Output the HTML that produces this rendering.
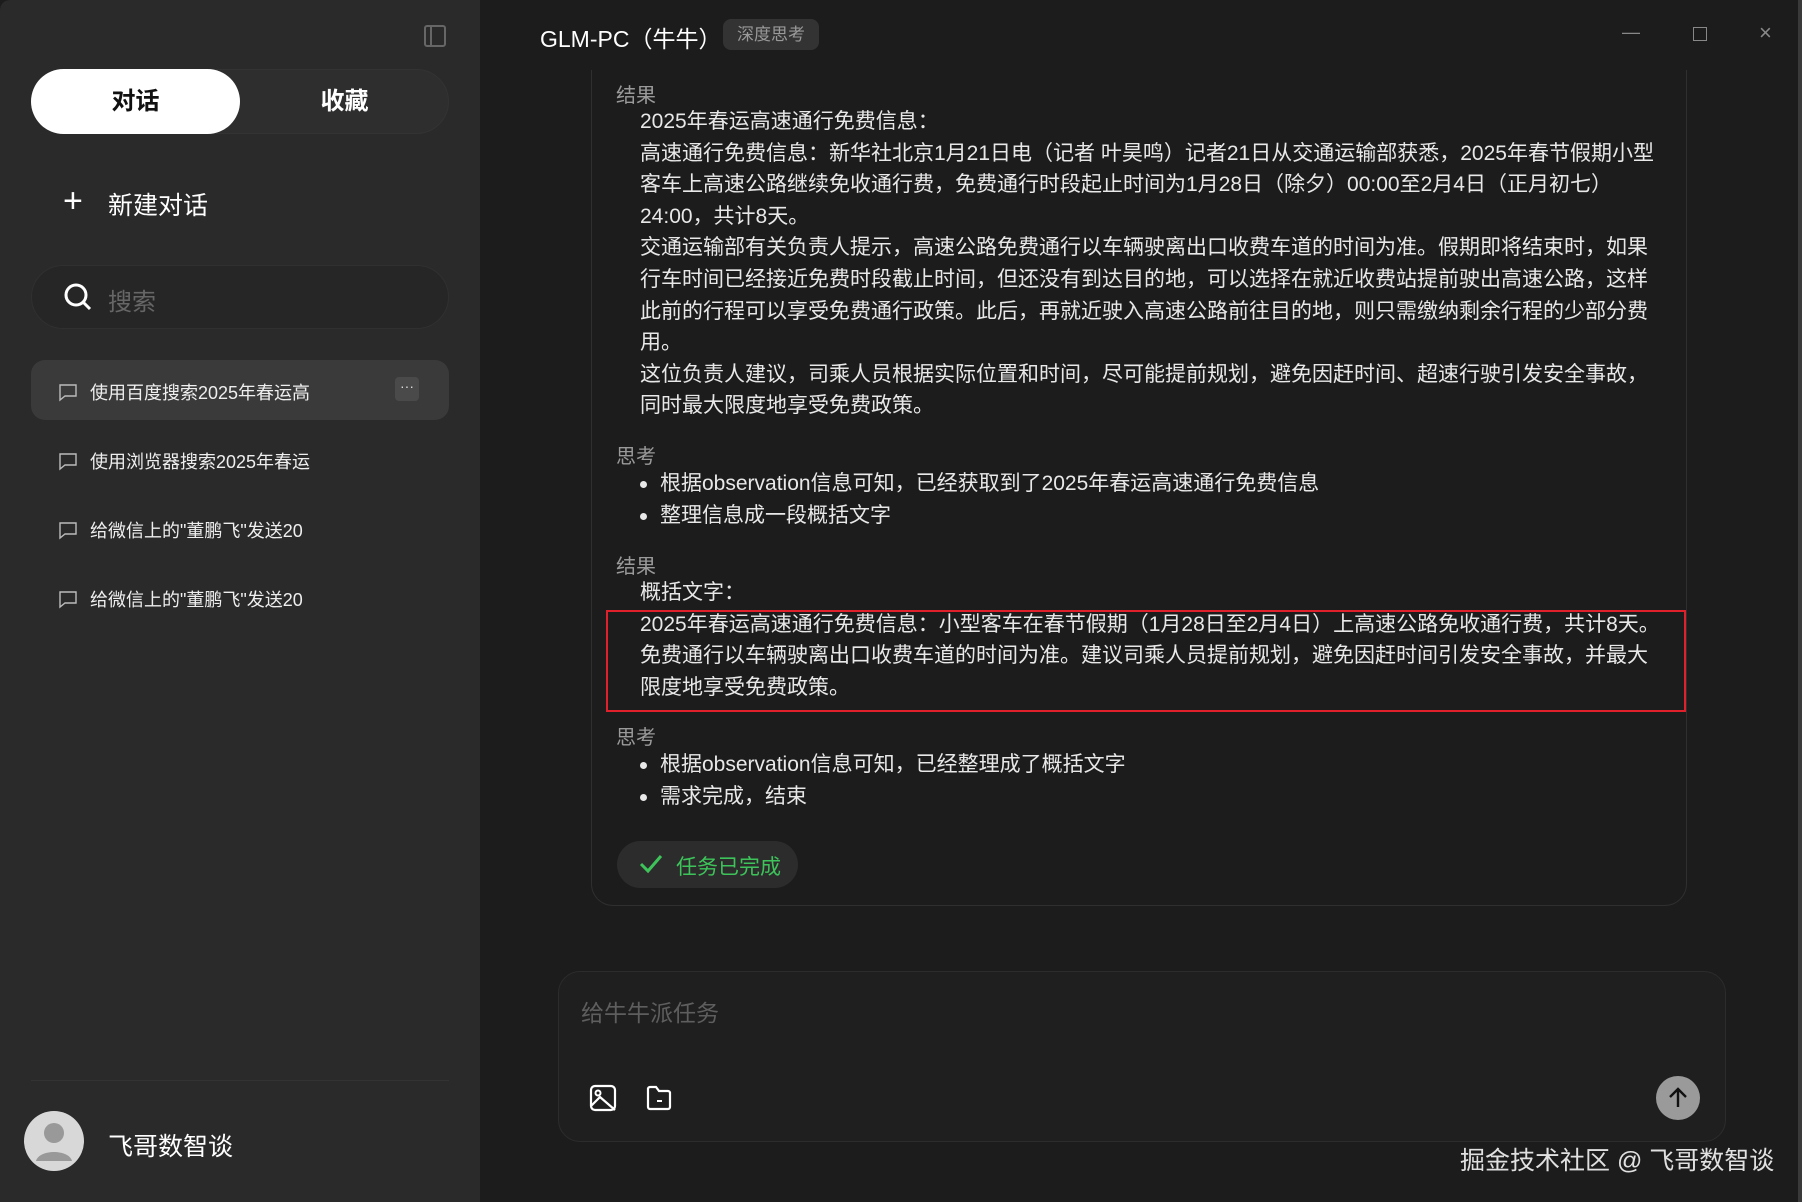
<!DOCTYPE html>
<html><head><meta charset="utf-8"><style>
*{margin:0;padding:0;box-sizing:border-box}
body{width:1802px;height:1202px;background:#1c1c1c;font-family:"Liberation Sans","Noto Sans CJK SC",sans-serif;color:#e6e6e6;position:relative;overflow:hidden}
.sb{position:absolute;left:0;top:0;width:480px;height:1202px;background:#2a2a2a;border-radius:10px 0 0 0}
.abs{position:absolute;white-space:nowrap}
.tabs{left:31px;top:69px;width:418px;height:65px;border-radius:33px;background:#2e2e2e;border:1px solid #333}
.tab1{left:31px;top:69px;width:209px;height:65px;border-radius:33px;background:#fff;color:#111;font-size:24px;font-weight:bold;text-align:center;line-height:65px}
.tab2{left:240px;top:69px;width:209px;height:65px;color:#fff;font-size:24px;font-weight:bold;text-align:center;line-height:65px}
.search{left:31px;top:265px;width:418px;height:64px;border-radius:32px;background:#262626;border:1px solid #303030}
.item{font-size:18px;color:#eee}
.t{font-size:21px;color:#e8e8e8;line-height:31.6px}
.lab{font-size:20px;color:#9a9a9a}
.dot{display:inline-block;width:7px;height:7px;border-radius:50%;background:#e8e8e8;margin-right:13px;vertical-align:middle}
</style></head><body>
<div class="sb"></div>
<svg class="abs" style="left:423px;top:24px" width="24" height="24" viewBox="0 0 24 24"><rect x="2" y="2" width="20" height="20" rx="2" fill="none" stroke="#666" stroke-width="2"/><line x1="8" y1="2" x2="8" y2="22" stroke="#666" stroke-width="2"/></svg>
<div class="abs tabs"></div>
<div class="abs tab1">对话</div>
<div class="abs tab2">收藏</div>
<div class="abs" style="left:63px;top:184px;font-size:34px;color:#fff;line-height:34px">+</div>
<div class="abs" style="left:108px;top:186px;font-size:25px;color:#fff">新建对话</div>
<div class="abs search"></div>
<svg class="abs" style="left:62px;top:281px" width="32" height="32" viewBox="0 0 32 32"><circle cx="14" cy="14" r="10" fill="none" stroke="#fff" stroke-width="3"/><line x1="21" y1="21" x2="28" y2="28" stroke="#fff" stroke-width="3"/></svg>
<div class="abs" style="left:108px;top:282px;font-size:24px;color:#666">搜索</div>
<div class="abs" style="left:31px;top:360px;width:418px;height:60px;border-radius:14px;background:#3a3a3a"></div>
<div class="abs" style="left:395px;top:377px;width:24px;height:24px;border-radius:4px;background:#4a4a4a;color:#ddd;font-size:14px;text-align:center;line-height:18px">···</div>
<svg class="abs" style="left:58px;top:382px" width="20" height="20" viewBox="0 0 20 20"><path d="M2 3h16v11H7l-5 4z" fill="none" stroke="#bbb" stroke-width="1.4"/></svg>
<div class="abs item" style="left:90px;top:379px">使用百度搜索2025年春运高</div>
<svg class="abs" style="left:58px;top:451px" width="20" height="20" viewBox="0 0 20 20"><path d="M2 3h16v11H7l-5 4z" fill="none" stroke="#bbb" stroke-width="1.4"/></svg>
<div class="abs item" style="left:90px;top:448px">使用浏览器搜索2025年春运</div>
<svg class="abs" style="left:58px;top:520px" width="20" height="20" viewBox="0 0 20 20"><path d="M2 3h16v11H7l-5 4z" fill="none" stroke="#bbb" stroke-width="1.4"/></svg>
<div class="abs item" style="left:90px;top:517px">给微信上的"董鹏飞"发送20</div>
<svg class="abs" style="left:58px;top:589px" width="20" height="20" viewBox="0 0 20 20"><path d="M2 3h16v11H7l-5 4z" fill="none" stroke="#bbb" stroke-width="1.4"/></svg>
<div class="abs item" style="left:90px;top:586px">给微信上的"董鹏飞"发送20</div>
<div class="abs" style="left:31px;top:1080px;width:418px;height:1px;background:#333"></div>
<svg class="abs" style="left:24px;top:1111px" width="60" height="60" viewBox="0 0 60 60"><circle cx="30" cy="30" r="30" fill="#d8d8d8"/><circle cx="30" cy="22" r="10" fill="#999"/><path d="M12 50c3-12 33-12 36 0" fill="#999"/></svg>
<div class="abs" style="left:108px;top:1127px;font-size:25px;color:#fff">飞哥数智谈</div>

<div class="abs" style="left:540px;top:20px;font-size:23px;color:#fff">GLM-PC（牛牛）</div>
<div class="abs" style="left:723px;top:19px;width:96px;height:31px;border-radius:8px;background:#333;color:#999;font-size:17px;text-align:center;line-height:31px">深度思考</div>
<div class="abs" style="left:1622px;top:22px;font-size:18px;color:#888">—</div>
<div class="abs" style="left:1693px;top:27px;width:14px;height:14px;border:1.5px solid #888"></div>
<div class="abs" style="left:1759px;top:20px;font-size:22px;color:#888">×</div>

<div class="abs" style="left:591px;top:70px;width:1096px;height:836px;border:1px solid #2f2f2f;border-top:none;border-radius:0 0 22px 22px"></div>
<div class="abs lab" style="left:616px;top:79px">结果</div>
<div class="abs t" style="left:640px;top:106px">2025年春运高速通行免费信息：<br>高速通行免费信息：新华社北京1月21日电（记者 叶昊鸣）记者21日从交通运输部获悉，2025年春节假期小型<br>客车上高速公路继续免收通行费，免费通行时段起止时间为1月28日（除夕）00:00至2月4日（正月初七）<br>24:00，共计8天。<br>交通运输部有关负责人提示，高速公路免费通行以车辆驶离出口收费车道的时间为准。假期即将结束时，如果<br>行车时间已经接近免费时段截止时间，但还没有到达目的地，可以选择在就近收费站提前驶出高速公路，这样<br>此前的行程可以享受免费通行政策。此后，再就近驶入高速公路前往目的地，则只需缴纳剩余行程的少部分费<br>用。<br>这位负责人建议，司乘人员根据实际位置和时间，尽可能提前规划，避免因赶时间、超速行驶引发安全事故，<br>同时最大限度地享受免费政策。</div>
<div class="abs lab" style="left:616px;top:440px">思考</div>
<div class="abs t" style="left:640px;top:468px"><span class="dot"></span>根据observation信息可知，已经获取到了2025年春运高速通行免费信息<br><span class="dot"></span>整理信息成一段概括文字</div>
<div class="abs lab" style="left:616px;top:550px">结果</div>
<div class="abs t" style="left:640px;top:577px">概括文字：<br>2025年春运高速通行免费信息：小型客车在春节假期（1月28日至2月4日）上高速公路免收通行费，共计8天。<br>免费通行以车辆驶离出口收费车道的时间为准。建议司乘人员提前规划，避免因赶时间引发安全事故，并最大<br>限度地享受免费政策。</div>
<div class="abs" style="left:606px;top:610px;width:1080px;height:102px;border:2px solid #e0202a"></div>
<div class="abs lab" style="left:616px;top:721px">思考</div>
<div class="abs t" style="left:640px;top:749px"><span class="dot"></span>根据observation信息可知，已经整理成了概括文字<br><span class="dot"></span>需求完成，结束</div>
<div class="abs" style="left:617px;top:841px;width:181px;height:47px;border-radius:24px;background:#2c2c2c"></div>
<svg class="abs" style="left:638px;top:852px" width="26" height="24" viewBox="0 0 26 24"><path d="M3 12l7 7L23 4" fill="none" stroke="#3dc35a" stroke-width="3"/></svg>
<div class="abs" style="left:676px;top:851px;font-size:21px;color:#3dc35a">任务已完成</div>

<div class="abs" style="left:558px;top:971px;width:1168px;height:171px;border-radius:22px;background:#1f1f1f;border:1px solid #2c2c2c"></div>
<div class="abs" style="left:581px;top:994px;font-size:23px;color:#5e5e5e">给牛牛派任务</div>
<svg class="abs" style="left:589px;top:1084px" width="28" height="28" viewBox="0 0 28 28"><rect x="2" y="2" width="24" height="24" rx="4" fill="none" stroke="#fff" stroke-width="2.2"/><circle cx="9" cy="9" r="2.5" fill="none" stroke="#fff" stroke-width="2"/><path d="M2 22l9-9 15 13" fill="none" stroke="#fff" stroke-width="2.2"/></svg>
<svg class="abs" style="left:645px;top:1084px" width="28" height="28" viewBox="0 0 28 28"><path d="M3 5a2 2 0 0 1 2-2h6l3 4h9a2 2 0 0 1 2 2v14a2 2 0 0 1-2 2H5a2 2 0 0 1-2-2z" fill="none" stroke="#fff" stroke-width="2.2"/><line x1="12" y1="17" x2="17" y2="17" stroke="#fff" stroke-width="2"/></svg>
<div class="abs" style="left:1656px;top:1076px;width:44px;height:44px;border-radius:50%;background:#9a9a9a"></div>
<svg class="abs" style="left:1664px;top:1084px" width="28" height="28" viewBox="0 0 28 28"><path d="M14 23V5M6 13l8-8 8 8" fill="none" stroke="#111" stroke-width="2.4"/></svg>
<div class="abs" style="left:1460px;top:1141px;font-size:25px;color:#e0e0e0;text-align:right;width:310px">掘金技术社区 @ 飞哥数智谈</div>
<div class="abs" style="left:1798px;top:0;width:4px;height:1202px;background:#3a3a3a"></div>
</body></html>
